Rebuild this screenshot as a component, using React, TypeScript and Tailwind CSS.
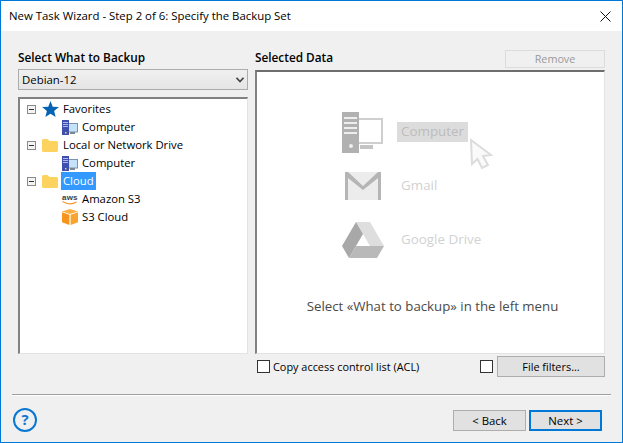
import React from "react";

const font = { fontFamily: '"Open Sans","Noto Sans",sans-serif' };

function Minus() {
  return (
    <span className="w-[9px] h-[9px] border border-[#8a8a8a] bg-[#f4f4f4] flex items-center justify-center shrink-0">
      <span className="w-[5px] h-px bg-[#333]" />
    </span>
  );
}
function Folder() {
  return (
    <svg width="16" height="14" viewBox="0 0 16 14" className="shrink-0">
      <path d="M0 2.5 Q0 1 1.5 1 H5.5 L7.5 3 H14.5 Q16 3 16 4.5 V12.5 Q16 14 14.5 14 H1.5 Q0 14 0 12.5Z" fill="#fdd35f" />
    </svg>
  );
}
function Star() {
  return (
    <svg width="17" height="16" viewBox="0 0 24 23" className="shrink-0">
      <path d="M12 0 L15.2 8.2 L24 8.8 L17.2 14.4 L19.4 23 L12 18.2 L4.6 23 L6.8 14.4 L0 8.8 L8.8 8.2Z" fill="#0563b4" />
    </svg>
  );
}
function Computer() {
  return (
    <svg width="16" height="15" viewBox="0 0 16 15" className="shrink-0">
      <rect x="5" y="3.5" width="10.5" height="8.5" fill="#c4e3f8" stroke="#7b93ad" />
      <rect x="8" y="12" width="5" height="2" fill="#7d8793" />
      <rect x="0" y="0" width="7" height="15" fill="#3f4fb0" />
      <path d="M1 2.5H6M1 4.5H6M1 6.5H6" stroke="#aeb8ea" />
      <rect x="3" y="12" width="1.5" height="1.5" fill="#e8d24a" />
    </svg>
  );
}
function Aws() {
  return (
    <svg width="16" height="14" viewBox="0 0 16 14" className="shrink-0">
      <text x="0" y="7.5" fontSize="8" fontWeight="700" fill="#3a3f45" fontFamily="Liberation Sans" textLength="15.5">aws</text>
      <path d="M0.5 9.5 Q8 14 14.5 10" fill="none" stroke="#f5982a" strokeWidth="1.3" />
    </svg>
  );
}
function Box() {
  return (
    <svg width="16" height="16" viewBox="0 0 16 16" className="shrink-0">
      <path d="M8 0 L16 2.5 L8 5 L0 2.5Z" fill="#fcae3c" />
      <path d="M0 3.3 L7.4 5.7 V16 L0 13.2Z" fill="#f7941e" />
      <path d="M16 3.3 L8.6 5.7 V16 L16 13.2Z" fill="#f9a42e" />
    </svg>
  );
}

function Row({ indent, icon, label, selected }: { indent?: boolean; icon: React.ReactNode; label: string; selected?: boolean }) {
  return (
    <div className={`h-[18px] flex items-center text-[11.3px] ${indent ? "pl-[42px]" : "pl-[7px]"}`}>
      {!indent && <Minus />}
      {!indent && <span className="w-[6px]" />}
      <span className="w-[16px] flex justify-center">{icon}</span>
      <span className={`${indent ? "ml-[2px]" : "ml-[3px]"} px-[2px] h-[18px] leading-[17px] ${selected ? "bg-[#3399ff] text-white" : "text-black"}`}>{label}</span>
    </div>
  );
}

function Hint({ icon, label, boxed }: { icon: React.ReactNode; label: string; boxed?: boolean }) {
  return (
    <div className="h-[54px] flex items-center">
      <span className="w-[44px] flex justify-center">{icon}</span>
      <span className={`ml-[12px] text-[13.4px] leading-[18px] pb-[2px] px-[4px] ${boxed ? "bg-[#dcdcdc] text-[#bdbdbd]" : "text-[#d2d2d2]"}`}>{label}</span>
    </div>
  );
}

export default function App() {
  return (
    <div style={font} className="w-[623px] h-[443px] border border-[#0078d7] bg-[#f0f0f0] flex flex-col text-[11.4px] text-black overflow-hidden">
      <div className="h-[30px] bg-white flex items-center justify-between pl-[8px] pr-[11px] shrink-0">
        <span>New Task Wizard - Step 2 of 6: Specify the Backup Set</span>
        <svg width="11" height="11" viewBox="0 0 11 11"><path d="M0.5 0.5L10.5 10.5M10.5 0.5L0.5 10.5" stroke="#111" strokeWidth="1" /></svg>
      </div>

      <div className="flex gap-[7px] pl-[17px] pr-[17px] pt-[19px] shrink-0">
        <div className="w-[230px] flex flex-col">
          <div className="h-[19px] text-[11.8px] font-semibold leading-[15px]">Select What to Backup</div>
          <div className="h-[21px] border border-[#acacac] bg-gradient-to-b from-[#f0f0f0] to-[#e5e5e5] flex items-center justify-between pl-[3px] pr-[3px]">
            <span>Debian-12</span>
            <svg width="8" height="6" viewBox="0 0 8 6"><path d="M0.5 0.8L4 4.5L7.5 0.8" fill="none" stroke="#444" strokeWidth="1.6" /></svg>
          </div>
          <div className="mt-[7px] h-[257px] bg-white border-2 border-r border-b border-t-[#828282] border-l-[#828282] border-r-[#e3e3e3] border-b-[#e3e3e3] pt-px">
            <Row icon={<Star />} label="Favorites" />
            <Row indent icon={<Computer />} label="Computer" />
            <Row icon={<Folder />} label="Local or Network Drive" />
            <Row indent icon={<Computer />} label="Computer" />
            <Row icon={<Folder />} label="Cloud" selected />
            <Row indent icon={<Aws />} label="Amazon S3" />
            <Row indent icon={<Box />} label="S3 Cloud" />
          </div>
        </div>

        <div className="w-[350px] flex flex-col">
          <div className="h-[19px] flex justify-between">
            <span className="text-[11.8px] font-semibold leading-[15px]">Selected Data</span>
            <span className="w-[100px] h-[18px] border border-[#dcdcdc] text-[#9a9a9a] text-[10.8px] flex items-center justify-center">Remove</span>
          </div>
          <div className="relative mt-px h-[284px] bg-white border-2 border-r border-b border-t-[#6e6e6e] border-l-[#828282] border-r-[#e3e3e3] border-b-[#e3e3e3] flex flex-col pl-[84px] pt-[33px]">
            <Hint
              boxed
              label="Computer"
              icon={
                <svg width="42" height="41" viewBox="0 0 42 41">
                  <rect x="11" y="7" width="29" height="24" fill="none" stroke="#cfcfcf" strokeWidth="2" />
                  <path d="M18 33H31V37H18Z" fill="#c4c4c4" />
                  <rect x="0" y="0" width="17" height="41" fill="#b1b1b1" />
                  <path d="M2 6H15M2 11H15M2 16H15M2 21H15" stroke="#eee" strokeWidth="2" />
                  <circle cx="9" cy="34" r="2" fill="#eee" />
                </svg>
              }
            />
            <Hint
              label="Gmail"
              icon={
                <svg width="36" height="28" viewBox="0 0 36 28">
                  <rect x="0" y="0" width="36" height="28" fill="#ececec" />
                  <path d="M0 0H3L18 14L33 0H36V28H33V6L18 18L3 6V28H0Z" fill="#b5b5b5" />
                </svg>
              }
            />
            <Hint
              label="Google Drive"
              icon={
                <svg width="42" height="36" viewBox="0 0 42 36">
                  <path d="M14 0H28L42 24H28Z" fill="#dedede" />
                  <path d="M14 0L0 24L7 36L21 12Z" fill="#a8a8a8" />
                  <path d="M14 24H42L35 36H7Z" fill="#b9b9b9" />
                </svg>
              }
            />
            <svg width="24" height="32" viewBox="0 0 24 32" className="absolute left-[212px] top-[66px]">
              <path d="M2 2 L22 17 L14 18 L19 27 L13 30 L8.5 21 L3 26Z" fill="#fafafa" stroke="#dcdcdc" strokeWidth="2" />
            </svg>
            <div className="-ml-[80px] mt-[30px] text-center text-[13.25px] text-[#4a4a4a]">Select «What to backup» in the left menu</div>
          </div>
          <div className="mt-[2px] h-[21px] flex items-center">
            <span className="w-[13px] h-[13px] border border-[#333] bg-white ml-[2px]" />
            <span className="ml-[3px] text-[10.9px] pt-px">Copy access control list (ACL)</span>
            <span className="ml-auto w-[13px] h-[13px] border border-[#333] bg-white" />
            <span className="ml-[4px] w-[108px] h-[21px] border border-[#adadad] bg-[#e1e1e1] flex items-center justify-center text-[10.9px] pt-px">File filters...</span>
          </div>
        </div>
      </div>

      <div className="mx-[11px] mt-[17px] h-[2px] border-t border-[#a0a0a0] border-b border-b-white box-border shrink-0" />

      <div className="flex items-center justify-between pl-[12px] pr-[20px] mt-[12px] shrink-0">
        <svg width="24" height="24" viewBox="0 0 24 24">
          <circle cx="12" cy="12" r="11" fill="none" stroke="#0a78d2" strokeWidth="2" />
          <text x="12" y="17" textAnchor="middle" fontSize="15" fontWeight="700" fill="#0a78d2" fontFamily="Open Sans">?</text>
        </svg>
        <div className="flex gap-[3px]">
          <span className="w-[73px] h-[21px] border border-[#adadad] bg-[#e1e1e1] flex items-center justify-center pt-px">&lt; Back</span>
          <span className="w-[73px] h-[21px] border-2 border-[#0078d7] bg-[#e1e1e1] flex items-center justify-center pt-px">Next &gt;</span>
        </div>
      </div>
    </div>
  );
}
